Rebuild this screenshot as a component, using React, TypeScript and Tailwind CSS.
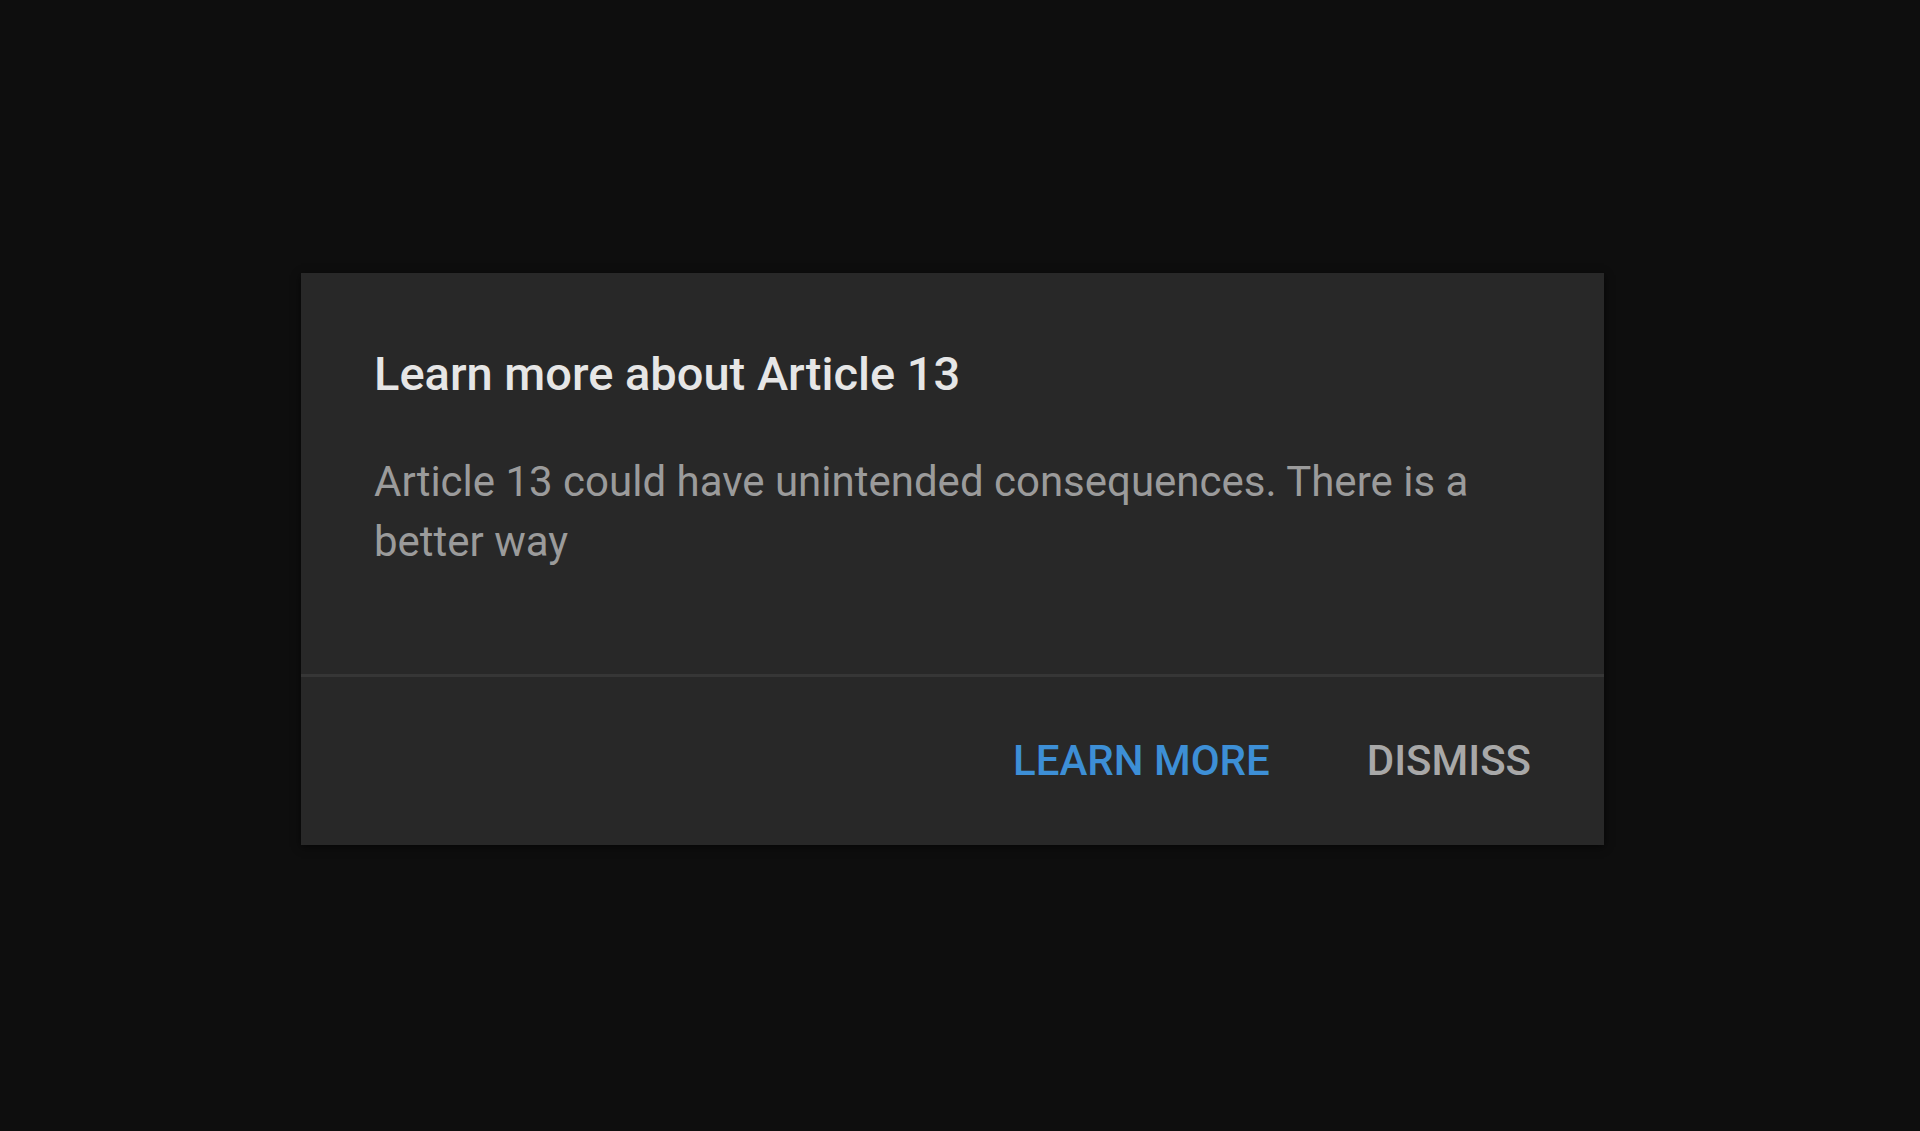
import React from 'react';

const App: React.FC = () => {
  return (
    <div className="min-h-screen w-full bg-[#0e0e0e] pt-[273px] pl-[301px]" style={{ fontFamily: 'Roboto, "Liberation Sans", sans-serif' }}>
      {/* Dialog */}
      <div className="w-[1303px] bg-[#282828] shadow-[0_2px_8px_rgba(0,0,0,0.6)]">
        <div className="pl-[73px] pr-[73px] pt-[72px] pb-[102px]">
          <h2 className="text-[47px] leading-[57px] font-medium text-[#e6e6e6]">
            Learn more about Article 13
          </h2>
          <p className="mt-[50px] text-[42px] leading-[60px] text-[#9b9b9b] max-w-[1140px]">
            Article 13 could have unintended consequences. There is a better way
          </p>
        </div>
        <div className="h-[3px] bg-[#363636]" />
        <div className="h-[168px] flex items-center justify-end pr-[73px] gap-[97px]">
          <button className="text-[42px] leading-[50px] font-medium uppercase text-[#3d8fd6]">
            Learn more
          </button>
          <button className="text-[42px] leading-[50px] font-medium uppercase text-[#a8a8a8]">
            Dismiss
          </button>
        </div>
      </div>
    </div>
  );
};

export default App;
